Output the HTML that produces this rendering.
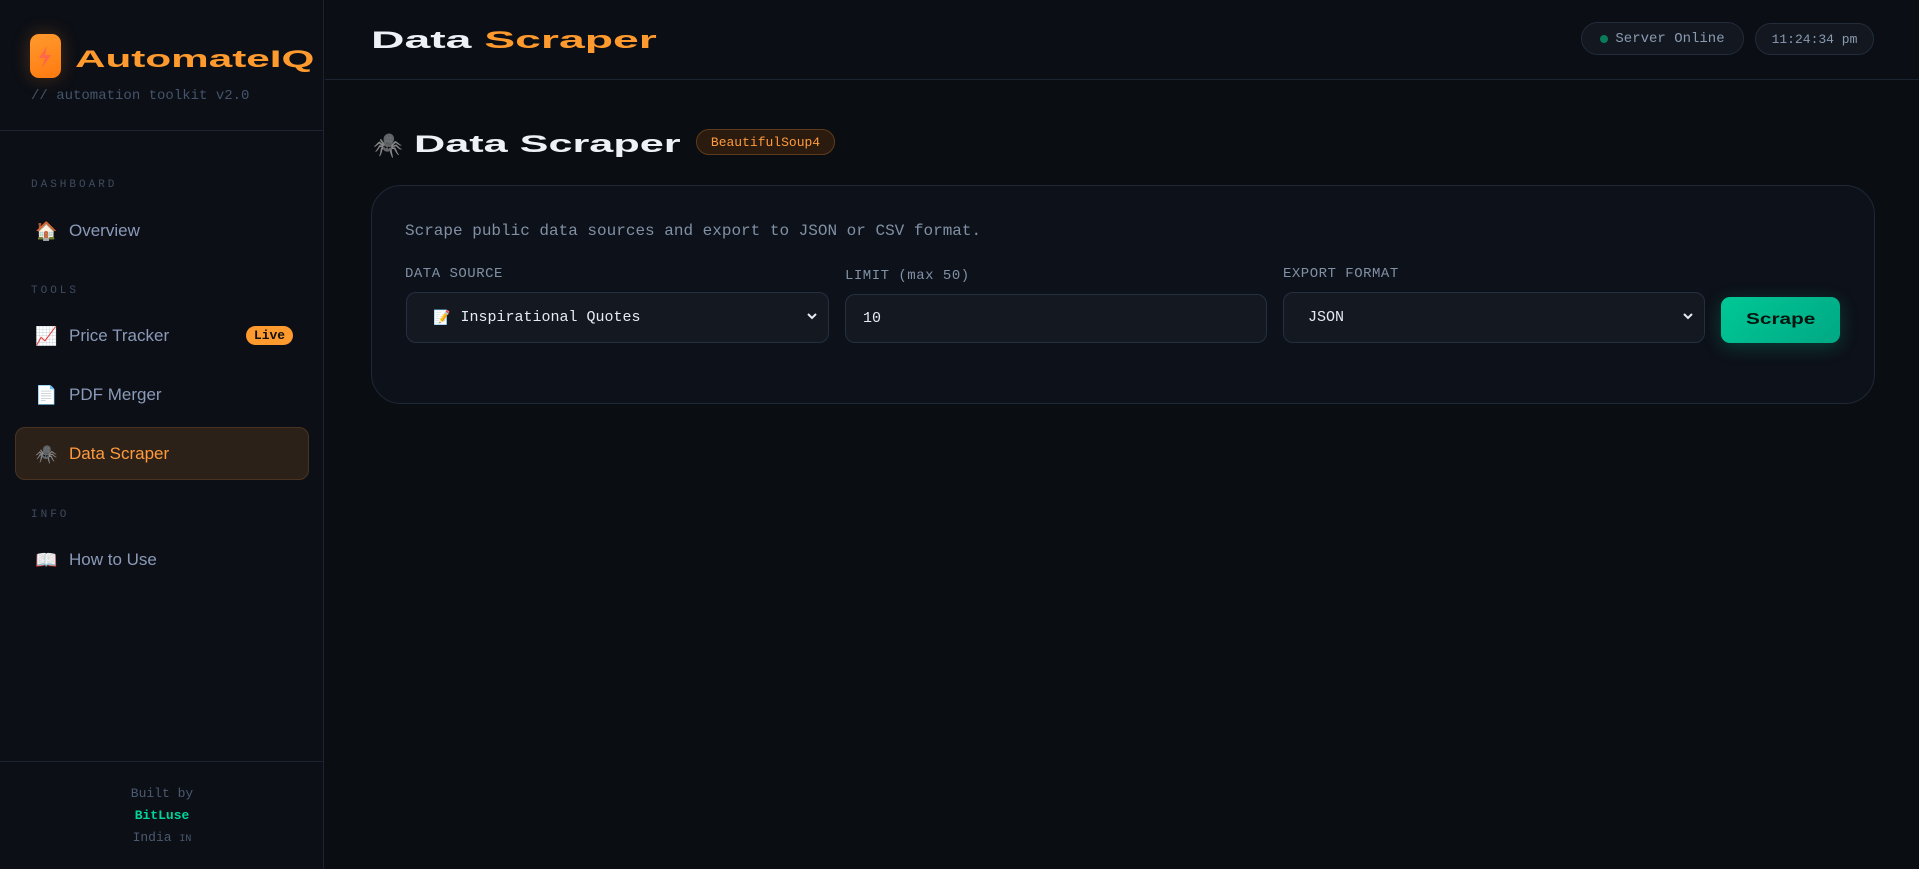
<!DOCTYPE html>
<html><head><meta charset="utf-8"><style>
*{box-sizing:border-box;margin:0;padding:0}
body{width:1919px;height:869px;background:#0a0d12;font-family:"Liberation Sans",sans-serif;position:relative;overflow:hidden;color:#8a9ab0}
.mono{font-family:"Liberation Mono",monospace}
.abs{position:absolute}
.wide{display:inline-block;transform-origin:left center;font-weight:bold;white-space:nowrap}
#side{position:absolute;left:0;top:0;width:324px;height:869px;background:#0c0f16;border-right:1px solid #1c2431}
.lbl{position:absolute;left:31px;font-family:"Liberation Mono",monospace;font-size:11px;letter-spacing:3px;color:#3e4c5f}
.item{position:absolute;left:35px;font-size:17px;color:#8a9ab8;display:flex;align-items:center;height:24px}
.item .ic{width:22px;font-size:18px;margin-right:12px;text-align:center;font-family:"Noto Color Emoji","DejaVu Sans",sans-serif}
.pill{position:absolute;border:1px solid #222c3a;background:#121720;border-radius:20px;font-family:"Liberation Mono",monospace;font-size:14px;color:#8a9ab0;display:flex;align-items:center;justify-content:center}
.fl{position:absolute;font-family:"Liberation Mono",monospace;font-size:14px;color:#8090a5;letter-spacing:.5px}
.field{position:absolute;background:#131821;border:1px solid #243040;border-radius:10px;font-family:"Liberation Mono",monospace;font-size:15px;color:#e6ebf2;display:flex;align-items:center}
.chev{position:absolute;right:10px;top:17px}
</style></head><body>
<div id="side">
  <div class="abs" style="left:30px;top:34px;width:31px;height:44px;border-radius:9px;background:linear-gradient(160deg,#ff9a2e,#ff7a10);box-shadow:0 0 18px rgba(255,140,30,.25)"></div>
  <svg class="abs" style="left:38px;top:46px" width="14" height="22" viewBox="0 0 14 22"><path d="M9 0 L1 12 H7 L4 22 L13 9 H7 Z" fill="#ff5a5a" opacity=".75"/></svg>
  <div class="abs" style="left:75px;top:46px;color:#ff9a2e;font-size:24px"><span class="wide" style="transform:scaleX(1.76)">AutomateIQ</span></div>
  <div class="abs mono" style="left:31px;top:88px;font-size:14px;color:#44546a">// automation toolkit v2.0</div>
  <div class="abs" style="left:0;top:130px;width:324px;height:1px;background:#1c2431"></div>
  <div class="lbl" style="top:179px">DASHBOARD</div>
  <div class="item" style="top:219px"><span class="ic">🏠</span>Overview</div>
  <div class="lbl" style="top:285px">TOOLS</div>
  <div class="item" style="top:324px"><span class="ic">📈</span>Price Tracker</div>
  <div class="abs mono" style="left:246px;top:326px;width:47px;height:19px;border-radius:10px;background:#ff9a2e;color:#111;font-weight:bold;font-size:13px;display:flex;align-items:center;justify-content:center">Live</div>
  <div class="item" style="top:383px"><span class="ic">📄</span>PDF Merger</div>
  <div class="abs" style="left:15px;top:427px;width:294px;height:53px;border-radius:10px;background:#2b2119;border:1px solid #4a3421"></div>
  <div class="item" style="top:442px;color:#ff9a3c"><span class="ic">🕷️</span>Data Scraper</div>
  <div class="lbl" style="top:509px">INFO</div>
  <div class="item" style="top:548px"><span class="ic">📖</span>How to Use</div>
  <div class="abs" style="left:0;top:761px;width:324px;height:1px;background:#1c2431"></div>
  <div class="abs mono" style="left:0;width:324px;top:783px;text-align:center;font-size:13px;color:#4a5a70;line-height:22px">Built by<br><b style="color:#00d49a">BitLuse</b><br>India <span style="font-size:10px">IN</span></div>
</div>
<div class="abs" style="left:325px;top:0;width:1594px;height:80px;background:#0b0e14;border-bottom:1px solid #1c2431"></div>
<div class="abs" style="left:371px;top:27px;font-size:24px"><span class="wide" style="transform:scaleX(1.93)"><span style="color:#eef1f5">Data </span><span style="color:#ff9a2e">Scraper</span></span></div>
<div class="pill" style="left:1581px;top:22px;width:163px;height:33px"><span style="width:8px;height:8px;border-radius:50%;background:#0a7a5a;margin-right:7px"></span>Server Online</div>
<div class="pill" style="left:1755px;top:23px;width:119px;height:32px;font-size:13px">11:24:34 pm</div>
<div class="abs" style="left:373px;top:131px;font-size:24px;font-family:'Noto Color Emoji','DejaVu Sans',sans-serif;color:#5a4a90">🕷️</div>
<div class="abs" style="left:414px;top:131px;font-size:24px;color:#eef1f5"><span class="wide" style="transform:scaleX(1.8)">Data Scraper</span></div>
<div class="abs mono" style="left:696px;top:129px;width:139px;height:26px;border-radius:14px;background:#2a1b0e;border:1px solid #5e3b1c;color:#ff9a3c;font-size:13px;display:flex;align-items:center;justify-content:center">BeautifulSoup4</div>
<div class="abs" style="left:371px;top:185px;width:1504px;height:219px;border-radius:30px;background:#0d1119;border:1px solid #1e2836"></div>
<div class="abs mono" style="left:405px;top:222px;font-size:16px;color:#8090a5">Scrape public data sources and export to JSON or CSV format.</div>
<div class="fl" style="left:405px;top:266px">DATA SOURCE</div>
<div class="fl" style="left:845px;top:268px">LIMIT (max 50)</div>
<div class="fl" style="left:1283px;top:266px">EXPORT FORMAT</div>
<div class="field" style="left:406px;top:292px;width:423px;height:51px;padding-left:26px"><span style="font-family:'Noto Color Emoji','DejaVu Sans',sans-serif;font-size:14px;margin-right:10px">📝</span>Inspirational Quotes<svg class="chev" width="12" height="12" viewBox="0 0 12 12"><path d="M2 4 L6 8 L10 4" stroke="#e6ebf2" stroke-width="2" fill="none"/></svg></div>
<div class="field" style="left:845px;top:294px;width:422px;height:49px;padding-left:17px">10</div>
<div class="field" style="left:1283px;top:292px;width:422px;height:51px;padding-left:24px">JSON<svg class="chev" width="12" height="12" viewBox="0 0 12 12"><path d="M2 4 L6 8 L10 4" stroke="#e6ebf2" stroke-width="2" fill="none"/></svg></div>
<div class="abs" style="left:1721px;top:297px;width:119px;height:46px;border-radius:9px;background:linear-gradient(135deg,#00c896,#00a884);box-shadow:0 4px 18px rgba(0,200,150,.25);display:flex;align-items:center;padding-left:25px;font-size:16px;color:#06140f"><span class="wide" style="transform:scaleX(1.3);font-weight:600">Scrape</span></div>
</body></html>
